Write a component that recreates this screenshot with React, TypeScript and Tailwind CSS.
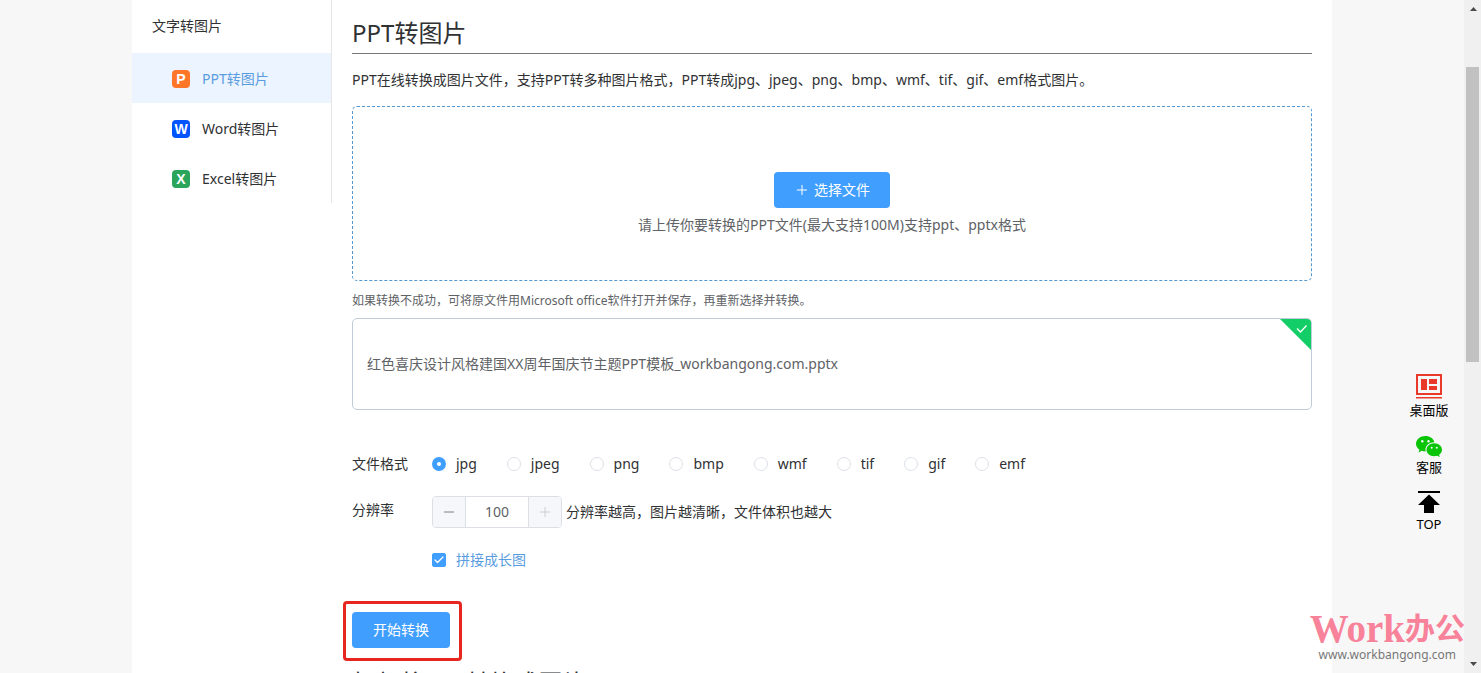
import { useState } from "react";
import { Check, Minus, Plus } from "lucide-react";

const menuItems = [
  { letter: "P", label: "PPT转图片", color: "bg-[#ff7629]", active: true },
  { letter: "W", label: "Word转图片", color: "bg-[#0055ff]", active: false },
  { letter: "X", label: "Excel转图片", color: "bg-[#2aa55b]", active: false },
];

const formats = ["jpg", "jpeg", "png", "bmp", "wmf", "tif", "gif", "emf"];

const Sidebar = () => {
  return (
    <nav className="w-50 shrink-0 self-start border-r border-[#e6e6e6]">
      <h2 className="h-[53px] pl-5 leading-[52px]">文字转图片</h2>
      <ul>
        {menuItems.map((item) => (
          <li key={item.letter}>
            <a
              href="#"
              className={`flex h-[50px] items-center gap-3 pt-0.5 pl-10 ${item.active ? "bg-[#ecf4ff] text-[#5a9ce0]" : ""}`}
            >
              <span
                className={`flex size-[18px] items-center justify-center rounded-sm font-['Liberation_Sans',sans-serif] text-sm font-bold text-white ${item.color}`}
              >
                {item.letter}
              </span>
              {item.label}
            </a>
          </li>
        ))}
      </ul>
    </nav>
  );
};

const UploadArea = () => {
  return (
    <section className="flex flex-col items-center rounded-[5px] border border-dashed border-[#5598cf] pt-[65px] pb-[39px]">
      <button type="button" className="flex h-9 items-center gap-1 rounded-sm bg-[#409eff] px-5 text-white">
        <Plus className="size-4" strokeWidth={1.5} />
        选择文件
      </button>
      <p className="leading-[33px] text-[#606266]">请上传你要转换的PPT文件(最大支持100M)支持ppt、pptx格式</p>
    </section>
  );
};

const FileCard = ({ name }: { name: string }) => {
  return (
    <section className="relative flex h-[92px] items-center overflow-hidden rounded-[5px] border border-[#c0ccda] px-3.5 text-[#606266]">
      {name}
      <svg className="absolute top-0 right-0 size-[31px]" viewBox="0 0 31 31" fill="none" aria-hidden="true">
        <path d="M0 0H31V31Z" fill="#13ce66" />
        <path d="M17 9.5l3.5 3.5 6-6.5" stroke="#fff" strokeWidth="1.3" />
      </svg>
    </section>
  );
};

const ConvertForm = () => {
  const [format, setFormat] = useState("jpg");
  const [dpi, setDpi] = useState(100);
  const [merge, setMerge] = useState(true);

  return (
    <form className="pt-[34px]" onSubmit={(e) => e.preventDefault()}>
      <fieldset className="flex h-10 items-center">
        <legend className="float-left w-20">文件格式</legend>
        <div className="flex gap-[30px]">
          {formats.map((item) => (
            <label key={item} className="flex items-center gap-2.5">
              <input
                type="radio"
                name="format"
                checked={format === item}
                onChange={() => setFormat(item)}
                className="size-3.5 appearance-none rounded-full border border-[#dcdfe6] bg-white checked:border-[5px] checked:border-[#409eff]"
              />
              {item}
            </label>
          ))}
        </div>
      </fieldset>

      <div className="mt-3 flex">
        <label htmlFor="dpi" className="w-20 leading-7">
          分辨率
        </label>
        <div className="flex h-8 w-[130px] overflow-hidden rounded-sm border border-[#dcdfe6] text-[#606266]">
          <button
            type="button"
            aria-label="减少"
            onClick={() => setDpi(Math.max(10, dpi - 10))}
            className="flex w-[33px] items-center justify-center border-r border-[#dcdfe6] bg-[#f5f7fa]"
          >
            <Minus className="size-4" strokeWidth={1.2} />
          </button>
          <input id="dpi" value={dpi} readOnly className="min-w-0 flex-1 text-center" />
          <button
            type="button"
            aria-label="增加"
            disabled={dpi >= 100}
            onClick={() => setDpi(dpi + 10)}
            className="flex w-[33px] items-center justify-center border-l border-[#dcdfe6] bg-[#f5f7fa] disabled:text-[#c0c4cc]"
          >
            <Plus className="size-4" strokeWidth={1.2} />
          </button>
        </div>
        <span className="ml-1 leading-8">分辨率越高，图片越清晰，文件体积也越大</span>
      </div>

      <div className="mt-3 flex h-10 items-center pl-20">
        <label className="flex items-center gap-2.5 text-[#5a9ce0]">
          <span className="relative flex">
            <input
              type="checkbox"
              checked={merge}
              onChange={() => setMerge(!merge)}
              className="size-3.5 appearance-none rounded-xs border border-[#dcdfe6] checked:border-[#409eff] checked:bg-[#409eff]"
            />
            {merge && <Check className="pointer-events-none absolute inset-px size-3 text-white" strokeWidth={2.5} />}
          </span>
          拼接成长图
        </label>
      </div>

      <div className="relative mt-8 w-fit">
        <button type="submit" className="h-9 rounded-sm bg-[#409eff] px-[21px] text-white">
          开始转换
        </button>
        <span className="pointer-events-none absolute -top-[11px] -right-3 -bottom-[13px] -left-[9px] rounded-sm border-3 border-[#e6261f]" />
      </div>
    </form>
  );
};

const SideTools = () => {
  return (
    <aside className="absolute top-[373px] right-8 flex w-10 flex-col text-center text-[13px] leading-[19px] whitespace-nowrap text-black">
      <a href="#" className="flex h-[61px] flex-col items-center">
        <svg className="h-7 w-[26px] shrink-0" viewBox="0 0 26 28" fill="#e8392b" aria-hidden="true">
          <path d="M0 1H26V22H0ZM2 3V20H24V3Z" fillRule="evenodd" />
          <path d="M5 6H11V17H5ZM13 6H21V11H13ZM13 13H21V17H13ZM0 24H26V25.500H0Z" />
        </svg>
        桌面版
      </a>
      <a href="#" className="flex h-14 flex-col items-center">
        <svg className="h-6 w-[26px] shrink-0" viewBox="0 0 26 24" fill="#09c407" aria-hidden="true">
          <path d="M9.500 2C4.200 2 0 5.500 0 9.800c0 2.400 1.300 4.500 3.400 6L2.500 18.500l3.300-1.700c1.200.4 2.500.6 3.900.6A7 7 0 0 1 9.500 15.500c0-4.200 4-7.400 8.900-7.300C17.500 4.500 13.800 2 9.500 2Z" />
          <path d="M18.200 9.200c-4.300 0-7.700 2.900-7.700 6.500s3.400 6.500 7.700 6.500c1 0 2-.2 2.900-.5L23.800 23l-.7-2.300c1.800-1.200 2.900-3 2.900-5 0-3.600-3.500-6.500-7.800-6.500Z" />
          <g fill="#f7f7f7">
            <circle cx="6.300" cy="7.300" r="1.200" />
            <circle cx="12.500" cy="7.300" r="1.200" />
            <circle cx="15.700" cy="13.700" r="1" />
            <circle cx="20.800" cy="13.700" r="1" />
          </g>
        </svg>
        客服
      </a>
      <a href="#" className="flex flex-col items-center">
        <svg className="h-[25px] w-[22px] shrink-0" viewBox="0 0 22 25" aria-hidden="true">
          <path d="M0 1H22V3H0ZM11 4.500L22 15H16V23H6V15H0Z" />
        </svg>
        TOP
      </a>
    </aside>
  );
};

const Watermark = () => {
  return (
    <div className="pointer-events-none absolute right-4 bottom-3 flex flex-col items-center whitespace-nowrap">
      <p className="flex items-center font-['Liberation_Serif','Noto_Sans_CJK_SC',serif] text-[39px] leading-10 font-bold text-[#f7829a]">
        Work<span className="text-3xl">办公</span>
      </p>
      <p className="text-xs leading-3 text-[#777777]">www.workbangong.com</p>
    </div>
  );
};

const ScrollRail = () => {
  return (
    <div className="flex w-[17px] shrink-0 flex-col items-center bg-[#f0f0f0]" aria-hidden="true">
      <svg className="h-[17px] w-4 shrink-0" viewBox="0 0 16 17" fill="#4a4a4a">
        <path d="M5 11L8.500 7L12 11Z" />
      </svg>
      <div className="flex-1 self-stretch pt-[50px] pl-0.5">
        <div className="h-1/2 w-[13px] bg-[#c1c1c1]" />
      </div>
      <svg className="h-[17px] w-4 shrink-0" viewBox="0 0 16 17" fill="#4a4a4a">
        <path d="M5 6L8.500 10L12 6Z" />
      </svg>
    </div>
  );
};

const App = () => {
  return (
    <div className="relative flex h-screen overflow-hidden bg-[#f7f7f7] font-['Noto_Sans','Noto_Sans_CJK_SC',sans-serif] text-sm text-[#303133]">
      <div className="min-w-0 flex-1 overflow-hidden">
        <div className="mx-auto flex min-h-full max-w-[1200px] bg-white">
          <Sidebar />
          <main className="min-w-0 flex-1 px-5">
            <h1 className="flex h-[54px] items-center border-b border-[#777777] pt-3 text-2xl">PPT转图片</h1>
            <p className="leading-[52px]">
              PPT在线转换成图片文件，支持PPT转多种图片格式，PPT转成jpg、jpeg、png、bmp、wmf、tif、gif、emf格式图片。
            </p>
            <UploadArea />
            <p className="pt-0.5 text-xs leading-[35px] text-[#606266]">
              如果转换不成功，可将原文件用Microsoft office软件打开并保存，再重新选择并转换。
            </p>
            <FileCard name="红色喜庆设计风格建国XX周年国庆节主题PPT模板_workbangong.com.pptx" />
            <ConvertForm />
            <h2 className="mt-[19px] text-2xl">如何将PPT转换成图片</h2>
          </main>
        </div>
      </div>
      <ScrollRail />
      <SideTools />
      <Watermark />
    </div>
  );
};

export default App;
